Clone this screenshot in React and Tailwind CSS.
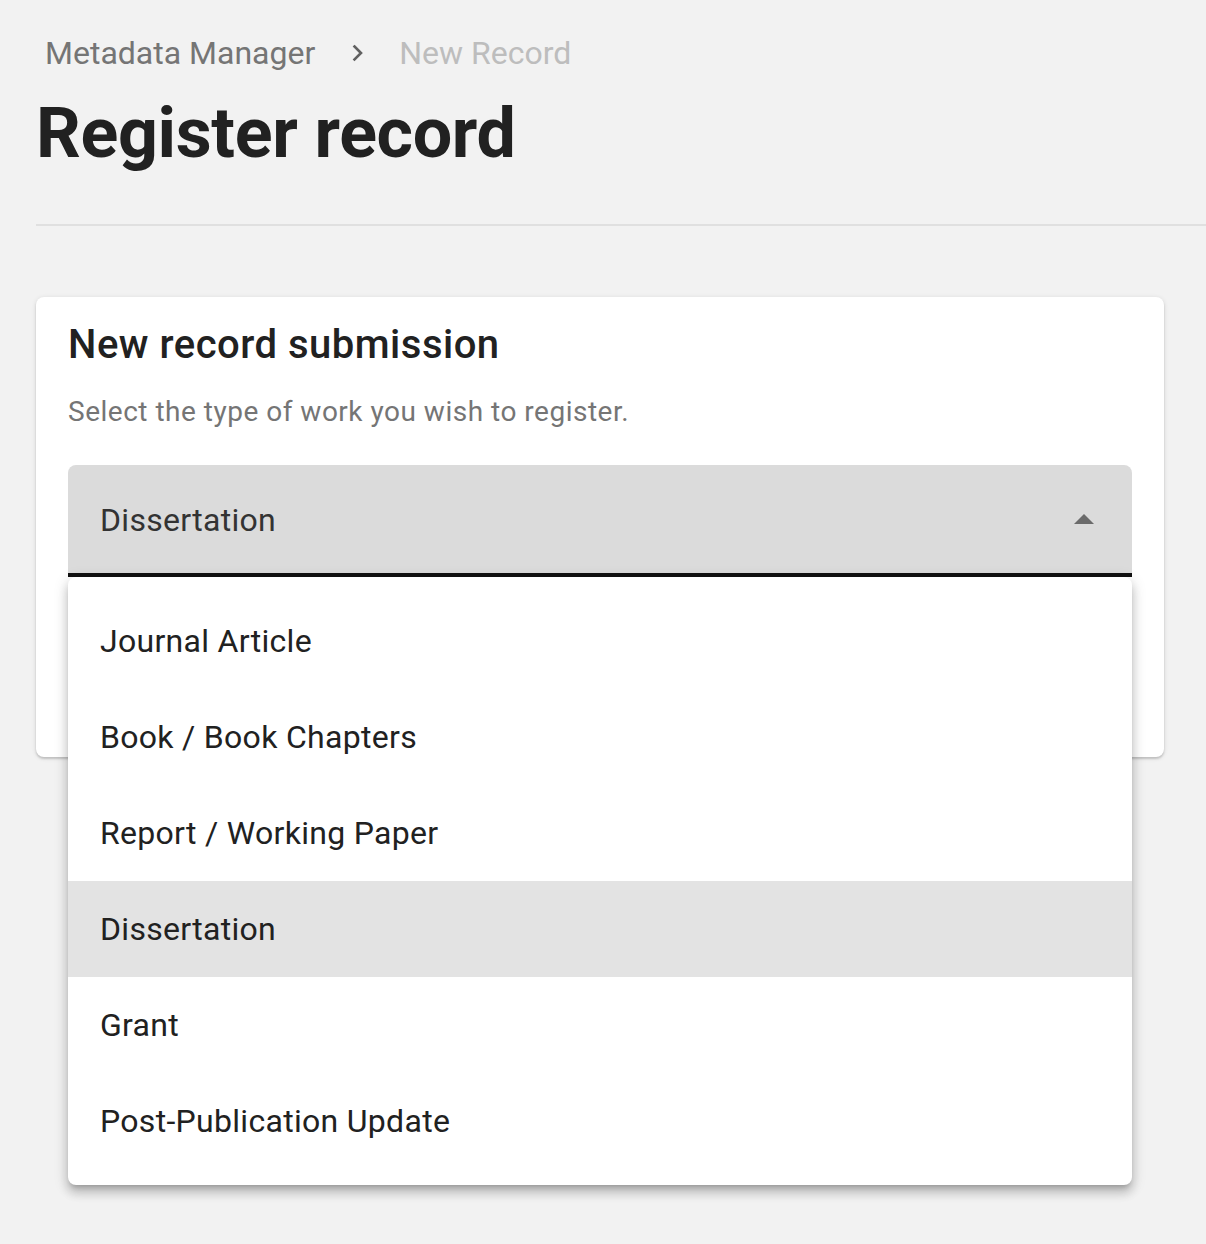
const OPTIONS = [
  'Journal Article',
  'Book / Book Chapters',
  'Report / Working Paper',
  'Dissertation',
  'Grant',
  'Post-Publication Update',
];

const SELECTED = 'Dissertation';

export default function App() {
  return (
    <div
      className="min-h-[1244px] bg-[#f2f2f2] pl-[36px] text-[#212121]"
      style={{ fontFamily: 'Roboto, "Noto Sans", "Liberation Sans", sans-serif' }}
    >
      {/* Header */}
      <div className="pt-[30px]">
        <nav className="flex items-center pl-[9px] text-[32px] leading-[46px]">
          <span className="text-[#757575]">Metadata Manager</span>
          <span className="ml-[37px] mr-[35px] flex items-center text-[#616161]">
            <svg className="h-[18px] w-[12px]" viewBox="0 0 12 18" fill="none" stroke="currentColor">
              <path d="M2.5 2.5 L9 9 L2.5 15.5" strokeWidth="2.6" strokeLinecap="square" />
            </svg>
          </span>
          <span className="text-[#bdbdbd]">New Record</span>
        </nav>
        <h1 className="mt-[14px] text-[70px] font-bold leading-[86px] tracking-[-0.35px] text-[#212121]">Register record</h1>
      </div>

      <div className="mt-[48px] h-[2px] bg-[#e0e0e0]" />

      {/* Card */}
      <div className="mt-[71px] mr-[42px] rounded-[8px] bg-white px-[32px] pt-[22px] pb-[180px] shadow-[0_2px_2px_rgba(0,0,0,0.14),0_1px_5px_rgba(0,0,0,0.12)]">
        <h2 className="text-[40px] font-medium leading-[52px] tracking-[0.5px] text-[#212121]">New record submission</h2>
        <p className="mt-[21px] text-[28px] leading-[40px] tracking-[0.5px] text-[#757575]">
          Select the type of work you wish to register.
        </p>

        {/* Select */}
        <div className="relative mt-[33px]">
          <div className="flex h-[112px] items-center justify-between rounded-t-[8px] border-b-[4px] border-[#111] bg-[#dbdbdb] pl-[32px] pr-[38px]">
            <span className="pt-[2px] text-[32px] tracking-[0.3px] text-[#333]">{SELECTED}</span>
            <svg className="h-[12px] w-[20px]" viewBox="0 0 20 12" fill="#6b6b6b">
              <path d="M0 11 L10 1 L20 11 Z" />
            </svg>
          </div>

          {/* Open menu */}
          <ul className="absolute left-0 right-0 top-[112px] z-10 rounded-[8px] bg-white py-[16px] shadow-[0_5px_5px_-3px_rgba(0,0,0,0.2),0_8px_10px_1px_rgba(0,0,0,0.14),0_3px_14px_2px_rgba(0,0,0,0.12)]">
            {OPTIONS.map((o) => (
              <li
                key={o}
                className={`flex h-[96px] items-center pl-[32px] text-[32px] tracking-[0.3px] text-[#212121] ${o === SELECTED ? 'bg-[#e3e3e3]' : ''}`}
              >
                {o}
              </li>
            ))}
          </ul>
        </div>
      </div>
    </div>
  );
}
